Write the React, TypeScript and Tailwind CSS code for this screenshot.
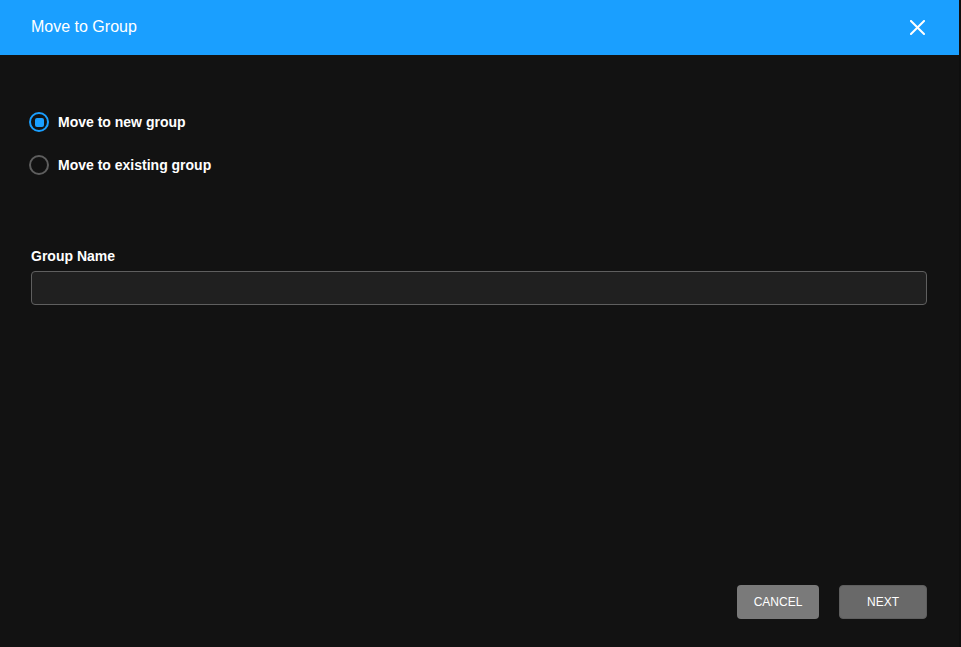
import React from "react";

export default function App() {
  return (
    <div
      className="w-[961px] h-[647px] bg-[#0e0e0e] flex overflow-hidden"
      style={{ fontFamily: '"Liberation Sans", Arial, sans-serif' }}
    >
      <div className="w-[959px] h-full bg-[#121212] flex flex-col">
        <div className="h-[55px] bg-[#1a9fff] flex items-center justify-between pl-[31px] pr-[34px] shrink-0">
          <span className="text-white text-[16px] leading-none -mt-[1px]">Move to Group</span>
          <svg width="15" height="15" viewBox="0 0 15 15">
            <path d="M1 1 L14 14 M14 1 L1 14" stroke="white" strokeWidth="2" strokeLinecap="square" />
          </svg>
        </div>
        <div className="flex-1 flex flex-col px-[31px] pt-[57px]">
          <div className="flex flex-col gap-[23px] -ml-[2px]">
            <label className="flex items-center gap-[9px] h-[20px]">
              <span className="w-[20px] h-[20px] rounded-full border-[2.5px] border-[#1a9fff] flex items-center justify-center">
                <span className="w-[9px] h-[9px] rounded-[2px] bg-[#1a9fff]" />
              </span>
              <span className="text-white text-[14px] font-bold">Move to new group</span>
            </label>
            <label className="flex items-center gap-[9px] h-[20px]">
              <span className="w-[20px] h-[20px] rounded-full border-[2.5px] border-[#5e5e5e]" />
              <span className="text-white text-[14px] font-bold">Move to existing group</span>
            </label>
          </div>
          <div className="mt-[71px] text-white text-[14px] font-bold leading-[20px]">Group Name</div>
          <div className="mt-[5px] h-[34px] w-[896px] rounded-[4px] border border-[#5f5f5f] bg-[#202020]" />
          <div className="flex-1" />
          <div className="flex justify-end gap-[20px] pb-[28px] pr-[1px]">
            <button className="w-[82px] h-[34px] rounded-[4px] bg-[#7a7a7a] text-white text-[12px] leading-none">
              CANCEL
            </button>
            <button className="w-[88px] h-[34px] rounded-[4px] bg-[#696969] border border-[#5e5e5e] text-white text-[12px] leading-none">
              NEXT
            </button>
          </div>
        </div>
      </div>
    </div>
  );
}
